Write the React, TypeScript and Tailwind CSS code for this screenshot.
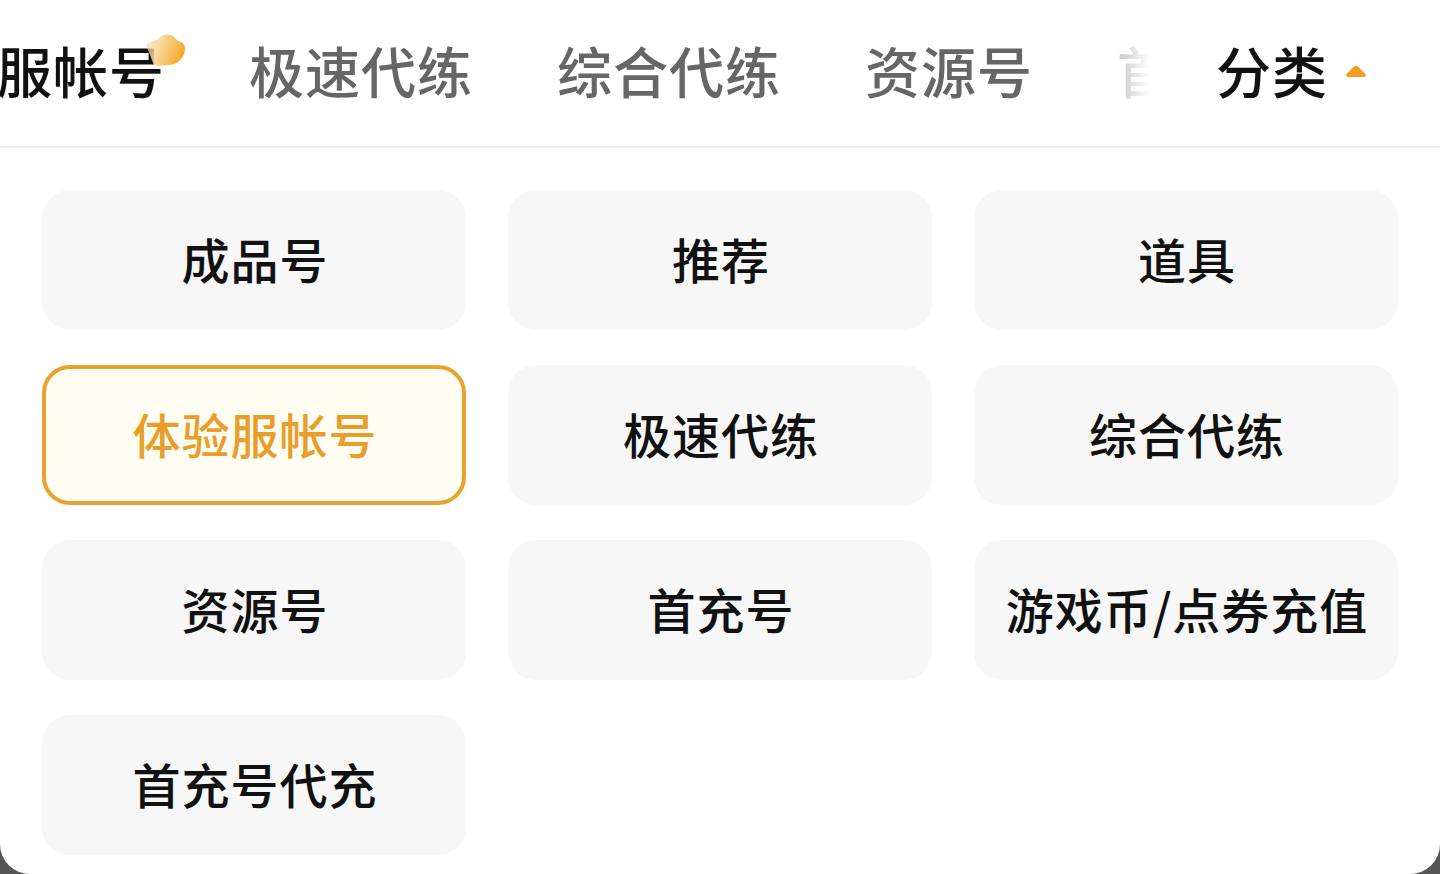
const font = { fontFamily: '"Noto Sans CJK SC", "Noto Sans", sans-serif' };

const items = [
  "成品号",
  "推荐",
  "道具",
  "体验服帐号",
  "极速代练",
  "综合代练",
  "资源号",
  "首充号",
  "游戏币/点券充值",
  "首充号代充",
];

function Cloud() {
  return (
    <svg className="absolute left-[258px] top-[-9px] h-[36px] w-[44px]" viewBox="0 0 44 36" fill="none">
      <defs>
        <linearGradient id="cloud" x1="2" y1="10" x2="40" y2="24" gradientUnits="userSpaceOnUse">
          <stop offset="0" stopColor="#f8e3b4" stopOpacity="0.6" />
          <stop offset="0.5" stopColor="#f6cf86" />
          <stop offset="1" stopColor="#f6a821" />
        </linearGradient>
      </defs>
      <path
        d="M3 12C7 7 13 8 15 6C19 1 27 0 31 4C33 6 34 8 38 9C42 11 43 15 41 21C39 26 34 32 26 32C20 33 14 33 11 32L3 12Z"
        fill="url(#cloud)"
      />
    </svg>
  );
}

export default function App() {
  return (
    <div className="h-[874px] w-[1440px] overflow-hidden bg-[#555555]" style={font}>
      <div className="flex h-[874px] flex-col rounded-b-[30px] bg-white">
        <header className="flex h-[148px] shrink-0 items-center border-b-2 border-[#ececec]">
          <div className="relative h-full w-[1150px] shrink-0 overflow-hidden">
            <div className="ml-[-115px] flex h-full items-center gap-[84px] whitespace-nowrap pb-[8px] text-[55px] font-medium leading-none tracking-[1px] text-[#666666]">
              <span className="relative text-[#111111]">
                体验服帐号
                <Cloud />
              </span>
              <span>极速代练</span>
              <span>综合代练</span>
              <span>资源号</span>
              <span>首</span>
            </div>
            <div className="absolute inset-y-0 right-0 w-[36px] bg-gradient-to-r from-white/60 to-white" />
          </div>
          <div className="ml-[66px] flex items-center gap-[16px] text-[55px] font-medium leading-none tracking-[1px] text-[#111111]">
            <span className="pb-[8px]">分类</span>
            <svg className="mb-[3px] h-[13px] w-[24px]" viewBox="0 0 24 14" fill="none">
              <path d="M1.5 10.5C1.5 12 2.5 13 4 13H20C21.5 13 22.5 12 22.5 10.5C22.5 9.8 22 9.2 21 8.6L14.5 2C13 .6 11 .6 9.5 2L3 8.6C2 9.2 1.5 9.8 1.5 10.5Z" fill="#f0a020" />
            </svg>
          </div>
        </header>
        <main className="grid grid-cols-[424px_424px_424px] gap-x-[42px] gap-y-[35px] pl-[42px] pt-[42px]">
          {items.map((t) => (
            <div
              key={t}
              className={
                t === "体验服帐号"
                  ? "flex h-[140px] items-center justify-center rounded-[28px] border-4 border-[#e9a22f] bg-[#fffcf2] pb-[4px] pl-[2px] text-[48px] font-medium tracking-[1px] text-[#e89e2b]"
                  : "flex h-[140px] items-center justify-center rounded-[28px] bg-[#f7f7f7] pb-[4px] pl-[2px] text-[48px] font-medium tracking-[1px] text-[#111111]"
              }
            >
              {t}
            </div>
          ))}
        </main>
      </div>
    </div>
  );
}
